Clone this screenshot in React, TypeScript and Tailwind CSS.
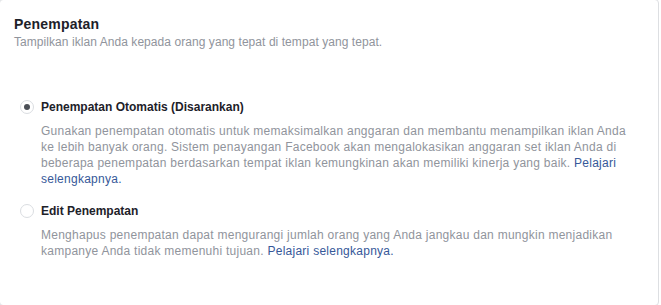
import React from "react";

const font = { fontFamily: '"Liberation Sans", Arial, Helvetica, sans-serif' };

function Radio({ checked }: { checked?: boolean }) {
  return (
    <span className="flex h-[14px] w-[14px] shrink-0 items-center justify-center rounded-full border border-[#dadde1] bg-white">
      {checked && <span className="h-[6px] w-[6px] rounded-full bg-[#4b4f56]" />}
    </span>
  );
}

function Option({
  checked,
  label,
  children,
}: {
  checked?: boolean;
  label: string;
  children: React.ReactNode;
}) {
  return (
    <div className="flex flex-col">
      <div className="flex items-center pl-[20px] h-[16px]">
        <Radio checked={checked} />
        <span className="ml-[7px] text-[12px] leading-[16px] font-bold text-[#1d2129]">{label}</span>
      </div>
      <p className="mt-[8px] ml-[41px] w-[596px] text-[12px] leading-[16px] tracking-[0.26px] text-[#90949c]">
        {children}
      </p>
    </div>
  );
}

export default function App() {
  return (
    <div className="h-[305px] w-[661px] overflow-hidden bg-white" style={font}>
      <div className="-ml-px -mt-px h-[307px] w-[660px] rounded-[4px] border border-[#dddfe2] bg-white">
        <div className="pl-[14px] pt-[15px]">
          <h2 className="text-[14px] leading-[18px] font-bold tracking-[0.2px] text-[#1d2129]">Penempatan</h2>
          <p className="mt-px text-[12px] leading-[16px] tracking-[0.06px] text-[#90949c]">
            Tampilkan iklan Anda kepada orang yang tepat di tempat yang tepat.
          </p>
        </div>
        <div className="mt-[49px] flex flex-col gap-[16px]">
          <Option checked label="Penempatan Otomatis (Disarankan)">
            Gunakan penempatan otomatis untuk memaksimalkan anggaran dan membantu menampilkan iklan Anda ke lebih
            banyak orang. Sistem penayangan Facebook akan mengalokasikan anggaran set iklan Anda di beberapa
            penempatan berdasarkan tempat iklan kemungkinan akan memiliki kinerja yang baik.{" "}
            <a className="text-[#365899]">Pelajari selengkapnya.</a>
          </Option>
          <Option label="Edit Penempatan">
            Menghapus penempatan dapat mengurangi jumlah orang yang Anda jangkau dan mungkin menjadikan kampanye
            Anda tidak memenuhi tujuan. <a className="text-[#365899]">Pelajari selengkapnya.</a>
          </Option>
        </div>
      </div>
    </div>
  );
}
